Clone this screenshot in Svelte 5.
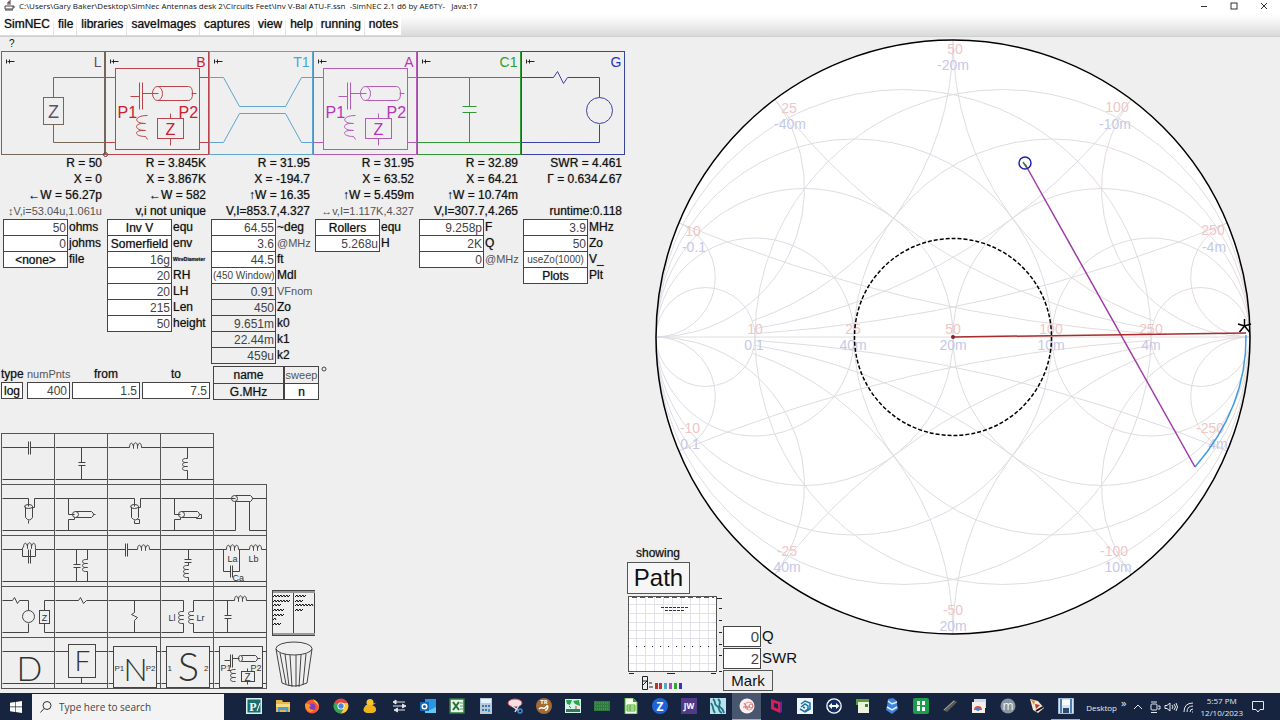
<script lang="ts">
	type Field = { label: string; value: string; kind?: 'button' | 'fixed' | 'small'; tone?: 'soft' | 'tiny' };
	type Stage = { id: string; symbol: string; color: string; line: string; readings: string[]; faint?: boolean; fields: Field[] };

	const menus = ['SimNEC', 'file', 'libraries', 'saveImages', 'captures', 'view', 'help', 'running', 'notes'];

	let stages: Stage[] = $state([
		{
			id: 'L', symbol: 'load', color: '#5f5064', line: '#75675a', faint: true,
			readings: ['R = 50', 'X = 0', '←W = 56.27p', '↕V,i=53.04u,1.061u'],
			fields: [
				{ label: 'ohms', value: '50' },
				{ label: 'johms', value: '0' },
				{ label: 'file', value: '<none>', kind: 'button' }
			]
		},
		{
			id: 'B', symbol: 'network', color: '#cc2030', line: '#b9464c',
			readings: ['R = 3.845K', 'X = 3.867K', '←W = 582', 'v,i not unique'],
			fields: [
				{ label: 'equ', value: 'Inv V', kind: 'button' },
				{ label: 'env', value: 'Somerfield', kind: 'button' },
				{ label: 'WireDiameter', value: '16g', tone: 'tiny' },
				{ label: 'RH', value: '20' },
				{ label: 'LH', value: '20' },
				{ label: 'Len', value: '215' },
				{ label: 'height', value: '50' }
			]
		},
		{
			id: 'T1', symbol: 'line', color: '#46a6dc', line: '#5ba6d2',
			readings: ['R = 31.95', 'X = -194.7', '↑W = 16.35', 'V,I=853.7,4.327'],
			fields: [
				{ label: '~deg', value: '64.55' },
				{ label: '@MHz', value: '3.6', tone: 'soft' },
				{ label: 'ft', value: '44.5' },
				{ label: 'Mdl', value: '(450 Window)', kind: 'small' },
				{ label: 'VFnom', value: '0.91', kind: 'fixed', tone: 'soft' },
				{ label: 'Zo', value: '450', kind: 'fixed' },
				{ label: 'k0', value: '9.651m', kind: 'fixed' },
				{ label: 'k1', value: '22.44m', kind: 'fixed' },
				{ label: 'k2', value: '459u', kind: 'fixed' }
			]
		},
		{
			id: 'A', symbol: 'network', color: '#b536b8', line: '#b45cb8', faint: true,
			readings: ['R = 31.95', 'X = 63.52', '↑W = 5.459m', '↔v,I=1.117K,4.327'],
			fields: [
				{ label: 'equ', value: 'Rollers', kind: 'button' },
				{ label: 'H', value: '5.268u' }
			]
		},
		{
			id: 'C1', symbol: 'shuntcap', color: '#2aa02a', line: '#2f9a35',
			readings: ['R = 32.89', 'X = 64.21', '↑W = 10.74m', 'V,I=307.7,4.265'],
			fields: [
				{ label: 'F', value: '9.258p' },
				{ label: 'Q', value: '2K' },
				{ label: '@MHz', value: '0', tone: 'soft' }
			]
		},
		{
			id: 'G', symbol: 'generator', color: '#2a32b4', line: '#3a43a4',
			readings: ['SWR = 4.461', 'Γ = 0.634∠67', '', 'runtime:0.118'],
			fields: [
				{ label: 'MHz', value: '3.9' },
				{ label: 'Zo', value: '50' },
				{ label: 'V_', value: 'useZo(1000)', kind: 'small' },
				{ label: 'Plt', value: 'Plots', kind: 'button' }
			]
		}
	]);

	const palette = [
		['series capacitor', 'shunt capacitor', 'series inductor', 'shunt inductor'],
		['series open stub', 'shunt open stub', 'series shorted stub', 'shunt shorted stub', 'transmission line'],
		['series parallel LC', 'shunt parallel LC', 'series LC', 'shunt series LC', 'trap'],
		['generator and load', 'series resistor', 'shunt resistor', 'transformer', 'L network'],
		['D block', 'F block', 'N block', 'S block', 'circuit block']
	];

	// chart geometry, in units of the chart's own view box
	const cx = 327;
	const cy = 300;
	const R = 297;
	const steps = [0.2, 0.5, 1, 2, 5];

	function gamma(r: number, x: number) {
		const d = (r + 1) ** 2 + x * x;
		return [(r * r - 1 + x * x) / d, (2 * x) / d];
	}

	// a reactance arc from the rim inwards; the flat ones stop at the r = 5 circle
	function arc(x: number, side: number, flip: number) {
		const [ax, ay] = gamma(0, x);
		const [bx, by] = x <= 1 ? gamma(5, x) : [1, 0];
		const p = (u: number, v: number) => `${(cx + side * u * R).toFixed(1)} ${(cy - flip * v * R).toFixed(1)}`;
		const sweep = side * flip > 0 ? 0 : 1;
		return `M${p(ax, ay)}A${R / x} ${R / x} 0 0 ${sweep} ${p(bx, by)}`;
	}

	const reactances = steps.flatMap((x) => [arc(x, 1, 1), arc(x, 1, -1)]);
	const susceptances = steps.flatMap((x) => [arc(x, -1, 1), arc(x, -1, -1)]);

	const ohmLabels: [string, number, number][] = [
		['50', 329, 17], ['25', 163, 76], ['100', 491, 75], ['10', 67, 199], ['250', 587, 198],
		['10', 129, 297], ['25', 227, 297], ['50', 327, 297], ['100', 425, 297], ['250', 525, 297],
		['-10', 64, 396], ['-25', 161, 519], ['-50', 327, 578], ['-100', 488, 519], ['-250', 584, 396]
	];
	const mhoLabels: [string, number, number][] = [
		['-20m', 327, 33], ['-40m', 164, 92], ['-10m', 489, 92], ['-0.1', 68, 215], ['-4m', 588, 215],
		['0.1', 128, 313], ['40m', 227, 313], ['20m', 327, 313], ['10m', 425, 313], ['4m', 525, 313],
		['0.1', 64, 412], ['40m', 161, 535], ['20m', 327, 594], ['10m', 492, 535], ['4m', 592, 412]
	];

	const apps = [
		'pilot', 'folder', 'firefox', 'chrome', 'duck', 'arrows', 'outlook', 'excel', 'calc', 'snip',
		'tr', 'map', 'board', 'sheet', 'zoom', 'jw', 'waves', 'smith', 'quick', 'swirl', 'viewer',
		'notepad', 'cubes', 'tile', 'pen', 'photos', 'm', 'paint', 'disk'
	];
	const running = ['smith', 'disk'];
</script>

{#snippet coil(x: number, y: number)}
	<path d="M{x} {y}c0-5 3-6 4-1v2v-2c0-5 4-5 4 0v2v-2c1-5 4-4 4 1" />
{/snippet}

{#snippet vcoil(x: number, y: number)}
	<path d="M{x} {y}h-2c-4 0-4 4 0 4h2h-2c-4 0-4 4 0 4h2h-2c-4 0-4 4 0 4h2" />
{/snippet}

{#snippet network()}
	<rect x="10" y="17" width="84" height="81" />
	<path d="M25 45h9M34 31v27M37 31v27M37 42h16M86 42h5" />
	<ellipse cx="52" cy="42" rx="5" ry="7" />
	<path d="M52 35h31q4 0 4 7t-4 7h-31" />
	<path d="M42 64c-14 0-14 8-2 8c-12-1-12 7 0 7c-12-1-12 6 0 6l2 3" />
	<rect x="52" y="67" width="26" height="20" />
	<path d="M65 62v5M65 87v7" />
	<text class="port" x="12" y="66" font-size="16">P1</text>
	<text class="port" x="73" y="66" font-size="16">P2</text>
	<text x="65" y="83" font-size="16" text-anchor="middle">Z</text>
{/snippet}

{#snippet stageSymbol(kind: string)}
	{#if kind === 'load'}
		<path d="M104 26H52V46M52 73V91H104" />
		<rect x="42" y="46" width="20" height="27" />
		<text x="52" y="66" font-size="18" text-anchor="middle">Z</text>
	{:else if kind === 'network'}
		<path d="M0 26h10M94 26h10M0 91h10M94 91h10" />
		{@render network()}
	{:else if kind === 'line'}
		<path d="M0 26H14L30 55H76L92 26H104M0 91H14L30 62H76L92 91H104" />
	{:else if kind === 'shuntcap'}
		<path d="M0 26H104M0 91H104M52 26V55M45 55h14M45 61h14M52 61V91" />
	{:else}
		<path d="M0 26H32L36 20L42 32L46 26H78V46M78 73V91H0" />
		<circle cx="78" cy="59" r="13" />
	{/if}
{/snippet}

{#snippet partSymbol(name: string)}
	{#if name === 'series capacitor'}
		<path d="M0 13H26M28 13H52M0 45H52M26 7V20M28 7V20" />
	{:else if name === 'shunt capacitor'}
		<path d="M0 13H52M0 45H52M26 13V28M23 28h7M23 31h7M26 31V45" />
	{:else if name === 'series inductor'}
		<path d="M0 13H21M33 13H52M0 45H52" />{@render coil(21, 13)}
	{:else if name === 'shunt inductor'}
		<path d="M0 13H52M0 45H52M26 13V24M26 36V45" />{@render vcoil(26, 24)}
	{:else if name === 'series open stub' || name === 'series shorted stub'}
		<path d="M0 13H26V21M32 22V13H52M0 45H52M23 21V32q4 5 7 0V21M30 22h2" />
		<ellipse cx="26" cy="21" rx="4" ry="2" />
		{#if name === 'series open stub'}<path d="M26 35v3" />{:else}<path d="M26 35v3h5v-4h-2" />{/if}
	{:else if name === 'shunt open stub' || name === 'shunt shorted stub'}
		<path d="M0 13H52M0 45H52M13 13V29H19M13 45V34H19V32M20 26H36q4 3 0 6H20" />
		<ellipse cx="20" cy="29" rx="3" ry="3" />
		{#if name === 'shunt open stub'}<path d="M38 29h2" />{:else}<path d="M38 29h2v4h-5v-1" />{/if}
	{:else if name === 'transmission line'}
		<path d="M0 13H21M38 13H52M21 10H36q4 3 0 6H21M21 16V45H0M35 16V45H52" />
		<ellipse cx="20" cy="13" rx="3" ry="3" />
	{:else if name === 'series parallel LC'}
		<path d="M0 13H20V20H33V13H52M0 45H52M26 13V27M28 13V27M20 13v-2M33 13v-2" />{@render coil(21, 11)}
	{:else if name === 'shunt parallel LC'}
		<path d="M0 13H52M0 45H52M21 13V28M18 28h7M18 31h7M21 31V45M32 13V23M32 35V45" />{@render vcoil(32, 23)}
	{:else if name === 'series LC'}
		<path d="M0 13H17M19 13H29M41 13H52M0 45H52M17 7V20M19 7V20" />{@render coil(29, 13)}
	{:else if name === 'shunt series LC'}
		<path d="M0 13H52M0 45H52M27 13V23M23 23h7M23 26h7M27 26V29M27 41V45" />{@render vcoil(27, 29)}
	{:else if name === 'trap'}
		<path d="M0 13H12M24 13H35M47 13H52M0 45H52M9 13V35H16M18 35H25V13M16 29V41M18 29V41" />
		{@render coil(12, 13)}{@render coil(35, 13)}
		<text x="13" y="25" font-size="9">La</text>
		<text x="34" y="25" font-size="9">Lb</text>
		<text x="18" y="44" font-size="9">Ca</text>
	{:else if name === 'generator and load'}
		<path d="M0 13H10l2-3l3 6l2-3H26V23M26 36V45H0M52 13H42V23M42 36V45H52" />
		<circle cx="26" cy="29" r="6" />
		<rect x="37" y="23" width="10" height="13" />
		<text x="42" y="33" font-size="9" text-anchor="middle">Z</text>
	{:else if name === 'series resistor'}
		<path d="M0 13H23l2-3l3 6l3-3H52M0 45H52" />
	{:else if name === 'shunt resistor'}
		<path d="M0 13H52M0 45H52M26 13V25l-3 2l6 3l-3 3V45" />
	{:else if name === 'transformer'}
		<path d="M0 13H22V24M22 36V45H0M52 13H32V24M32 36V45H52" />
		{@render vcoil(22, 24)}{@render vcoil(32, 24)}
		<text x="7" y="33" font-size="9">Ll</text>
		<text x="35" y="33" font-size="9">Lr</text>
	{:else if name === 'L network'}
		<path d="M0 13H20M32 13H52M0 45H52M13 13V28M10 28h7M10 31h7M13 31V45" />{@render coil(20, 13)}
	{:else if name === 'D block'}
		<path d="M0 13H52M0 45H52" />
		<text class="big" x="27" y="42" font-size="34">D</text>
	{:else if name === 'F block'}
		<path d="M0 13H13M40 13H52M0 45H52M26 39V45" />
		<rect x="13" y="6" width="27" height="33" />
		<text class="big" x="27" y="32" font-size="28">F</text>
	{:else if name === 'N block' || name === 'S block'}
		<path d="M0 13H5M48 13H52M0 45H5M48 45H52" />
		<rect x="5" y="8" width="43" height="41" />
		<text class="big" x="27" y="42" font-size={name === 'N block' ? 32 : 40}>{name[0]}</text>
		<text x="6" y="32" font-size="8">{name === 'N block' ? 'P1' : '1'}</text>
		<text x="47" y="32" font-size="8" text-anchor="end">{name === 'N block' ? 'P2' : '2'}</text>
	{:else}
		<path d="M0 13H5M48 13H52M0 45H5M48 45H52M10 22h6M16 16V29M18 16V29M18 20h7M43 20h3M27 17H41q4 3 0 6H27" />
		<rect x="5" y="8" width="43" height="41" />
		<ellipse cx="26" cy="20" rx="2" ry="3" />
		<path d="M33 30v3M33 43v3" />
		<rect x="27" y="33" width="13" height="10" />
		{@render vcoil(21, 31)}
		<text x="6" y="32" font-size="9">P1</text>
		<text x="36" y="32" font-size="9">P2</text>
		<text x="33" y="42" font-size="10" text-anchor="middle">Z</text>
	{/if}
{/snippet}

{#snippet appIcon(name: string)}
	{#if name === 'pilot'}
		<rect width="16" height="16" fill="#d9efec" /><rect x="1.500" y="1.500" width="13" height="13" fill="#176f70" />
		<text x="7" y="13" font-size="12" font-weight="bold" font-family="Liberation Serif, serif" fill="#fff" text-anchor="middle">P</text>
		<path d="M11 13l3-8" stroke="#fff" />
	{:else if name === 'folder'}
		<path d="M1 2h6l1 2h7v10H1z" fill="#e9b64a" /><path d="M1 6h14v3H1z" fill="#f8dc84" /><path d="M3 9h10v5h-2v-2H5v2H3z" fill="#4b9fd8" />
	{:else if name === 'firefox'}
		<circle cx="8" cy="8.500" r="7" fill="#f5563a" /><path d="M9 1c6 3 7 9 4 12c4-7-2-7-4-12z" fill="#ffd23c" /><circle cx="8" cy="9" r="3.500" fill="#7b3fc4" /><path d="M1 6c2-1 5 0 6 2c-3 0-2 4 3 4c-3 4-9 1-9-6z" fill="#ff9422" />
	{:else if name === 'chrome'}
		<circle cx="8" cy="8" r="7.500" fill="#e0463a" /><path d="M8 8L1.500 4.500A7.500 7.500 0 0 0 8 15.500l3-5z" fill="#37a453" /><path d="M8 15.500A7.500 7.500 0 0 0 14.700 5H8l3.500 4z" fill="#f8ce3b" /><circle cx="8" cy="8" r="3.600" fill="#fff" /><circle cx="8" cy="8" r="2.700" fill="#4a86e0" />
	{:else if name === 'duck'}
		<circle cx="8" cy="4.500" r="3.500" fill="#f7c62f" /><path d="M4 7h6c6 2 5 8 0 8H5c-5-1-4-5-1-8z" fill="#efb41c" /><path d="M11 5h3l-3 2z" fill="#e07a1c" />
	{:else if name === 'arrows'}
		<path d="M14 4H5M5 2L2 4l3 2zM2 8h9M11 6l4 2l-4 2M14 12H7M7 10l-4 2l4 2" stroke="#e6e6e6" fill="#e6e6e6" />
	{:else if name === 'outlook'}
		<rect x="5" y="1" width="11" height="14" fill="#2a96e0" /><path d="M5 9l5 3l6-3v6H5z" fill="#64c6f2" /><rect y="4" width="9" height="9" fill="#1268b8" /><circle cx="4.500" cy="8.500" r="2.300" fill="none" stroke="#fff" stroke-width="1.500" />
	{:else if name === 'excel'}
		<rect x="1" y="1" width="14" height="14" fill="#e8f2e6" stroke="#2d7d3e" stroke-width="1.500" /><path d="M4 4l6 8M10 4l-6 8" stroke="#227238" stroke-width="2" /><path d="M11 5h3M11 8h3M11 11h3" stroke="#58a066" />
	{:else if name === 'calc'}
		<rect x="2" y="0" width="12" height="16" fill="#b9c9d5" /><rect x="3" y="1" width="10" height="4" fill="#e4f4ff" /><path d="M4 7h2v2H4zM7 7h2v2H7zM10 7h2v2h-2zM4 11h2v2H4zM7 11h2v2H7z" fill="#3e78a8" /><path d="M10 11h2v3h-2z" fill="#2b9ce8" />
	{:else if name === 'snip'}
		<ellipse cx="8" cy="5" rx="7" ry="4" fill="#f6dfe3" stroke="#d34b5e" /><path d="M5 8l7 5M12 7l-4 7" stroke="#d7e4ee" stroke-width="1.500" /><circle cx="13" cy="13" r="2" fill="none" stroke="#4a8cd0" stroke-width="1.500" />
	{:else if name === 'tr'}
		<circle cx="8" cy="8" r="8" fill="#a36a31" /><text x="8" y="6" font-size="6" font-weight="bold" fill="#fff" text-anchor="middle">TR</text><path d="M3 11c3-4 4 2 7-2s2 4-1 3" stroke="#fff" stroke-width="1.500" fill="none" />
	{:else if name === 'map'}
		<rect y="1" width="16" height="14" fill="#d8f2f0" /><path d="M1 2h6l-2 5l-3-1zM8 3l6-1l1 6l-5-2z" fill="#25a844" /><path d="M1 11h14v3H1z" fill="#317a52" /><path d="M4 8l2 2M11 8v3" stroke="#d34" />
	{:else if name === 'board'}
		<rect y="3" width="16" height="10" fill="#2f7a3d" /><path d="M1 5h14M1 8h14M1 11h14" stroke="#58a35c" stroke-dasharray="1 1" />
	{:else if name === 'sheet'}
		<path d="M2 0h8l4 4v12H2z" fill="#f4fff0" stroke="#52b52c" /><path d="M10 0v4h4z" fill="#3a9a1c" /><path d="M4 7h8v6H4zM4 9h8M4 11h8M7 7v6" stroke="#4aaa2a" fill="none" />
	{:else if name === 'zoom'}
		<circle cx="8" cy="8" r="8" fill="#1f63d8" /><text x="8" y="12.500" font-size="12" font-weight="bold" fill="#fff" text-anchor="middle">Z</text>
	{:else if name === 'jw'}
		<rect width="16" height="16" fill="#523a88" /><text x="8" y="11" font-size="8" font-weight="bold" fill="#fff" text-anchor="middle">JW</text>
	{:else if name === 'waves'}
		<rect width="16" height="16" fill="#b9e1e8" /><path d="M3 1c4 3 0 5 4 7s0 5 5 7M8 1c5 4-1 6 2 8s3 3 4 6M1 5c3 4 1 6 4 10" stroke="#1b7488" stroke-width="1.800" fill="none" />
	{:else if name === 'smith'}
		<circle cx="8" cy="8" r="7.500" fill="#faf0f0" /><circle cx="10" cy="8" r="4" fill="none" stroke="#e29a9a" /><circle cx="12" cy="8" r="2" fill="none" stroke="#d77" /><path d="M5 5l4 6M4 9h7" stroke="#d66" />
	{:else if name === 'quick'}
		<path d="M3 1l9 3v11l-9-4z" fill="#d51f58" /><path d="M6 5l4 1v5l-4-2z" fill="#1b2444" /><path d="M12 4l2-1v11l-2 1z" fill="#7a1e8c" />
	{:else if name === 'swirl'}
		<rect width="16" height="16" fill="#eef5fa" /><path d="M4 6l4-3l5 2v6l-5 3l-5-3M4 9l4-3l3 2v3l-3 2M6 9l2 1" stroke="#1a73a8" stroke-width="1.500" fill="none" />
	{:else if name === 'viewer'}
		<circle cx="8" cy="8" r="7.800" fill="#fff" /><circle cx="8" cy="8" r="6.500" fill="#102e68" /><path d="M2.500 8l3.500-3v2h4V5l3.500 3l-3.500 3V9H6v2z" fill="#fff" />
	{:else if name === 'notepad'}
		<rect x="3" y="2" width="11" height="13" fill="#edf2de" /><path d="M1 1h13v3H3v3H1z" fill="#5b9c40" /><path d="M10 6h3v3h-3z" fill="#3d7d34" />
	{:else if name === 'cubes'}
		<path d="M4 1l5-1l4 3v3l1 5l-6 5l-6-4l1-4z" fill="#3f83dc" /><path d="M4 3l4 3l5-2M3 9l5 3l5-3" stroke="#e2f1ff" stroke-width="1.500" fill="none" />
	{:else if name === 'tile'}
		<rect width="16" height="16" rx="2" fill="#1d9e4c" /><path d="M4 3h3v4H4zM4 8h3v5H4zM9 3h3v4H9zM9 9h3v4H9z" fill="#fff" />
	{:else if name === 'pen'}
		<path d="M1 12L12 2l3 2L5 14z" fill="#5c5b59" /><path d="M2 12L12 3" stroke="#b3aca2" />
	{:else if name === 'photos'}
		<rect x="3" y="1" width="12" height="9" fill="#cddbe8" /><rect x="1" y="4" width="13" height="11" fill="#f3eee9" /><path d="M3 12a4 4 0 0 1 8 0z" fill="#df5144" /><circle cx="7" cy="11" r="2" fill="#437fcf" />
	{:else if name === 'm'}
		<circle cx="8" cy="8" r="7.500" fill="#8596a5" /><text x="8" y="12" font-size="12" fill="#e9f3fa" text-anchor="middle">m</text>
	{:else if name === 'paint'}
		<path d="M1 1l8 2l6 7l-6 5l-5-3z" fill="#f1e7d6" /><path d="M2 2l4 1l-1 4z" fill="#de8b28" /><path d="M6 6l5 1l-4 4z" fill="#c7342e" /><path d="M7 13l7-4" stroke="#111" stroke-width="2" />
	{:else}
		<rect width="16" height="16" fill="#d6e6f4" stroke="#7293b6" /><path d="M2 1h2v14H2zM12 1h2v14h-2z" fill="#4e7fb0" /><rect x="4" y="2" width="8" height="5" fill="#fafafa" /><rect x="5" y="10" width="6" height="5" fill="#304a6e" />
	{/if}
{/snippet}

<div class="app">
	<header class="title-bar">
		<svg width="11" height="11" viewBox="0 0 11 11" fill="none" stroke="#444">
			<path d="M1 6h8v3H1zM9 6h1v2M4 5V2l2 1v2M6 3V0M1 10h8" />
			<path d="M5 1v3" stroke="#b33" />
		</svg>
		<span class="path">C:\Users\Gary Baker\Desktop\SimNec Antennas desk 2\Circuits Feet\Inv V-Bal ATU-F.ssn &nbsp;-SimNEC 2.1 d6 by AE6TY- &nbsp; Java:17</span>
		<div class="window-buttons">
			<button aria-label="Minimize"><svg width="8" height="8" viewBox="0 0 8 8"><path d="M1 4.500h6" /></svg></button>
			<button aria-label="Maximize"><svg width="8" height="8" viewBox="0 0 8 8"><rect x="1" y="1" width="6" height="6" /></svg></button>
			<button aria-label="Close"><svg width="8" height="8" viewBox="0 0 8 8"><path d="M1 1l6 6M7 1l-6 6" /></svg></button>
		</div>
	</header>

	<nav class="menu-bar">
		{#each menus as item}
			<button>{item}</button>
		{/each}
	</nav>

	<main class="workspace">
		<section class="circuit">
			<button class="help">?</button>

			<div class="stages">
				{#each stages as stage}
					<div class="stage">
						<svg class="schematic" viewBox="-0.500 -0.500 104 104" stroke={stage.line} fill="none" style:color={stage.color}>
							<rect width="103" height="103" />
							{@render stageSymbol(stage.symbol)}
							<path d="M5 8v4M6 10h7M8 8v4" stroke="#222" />
							<text x="100" y="15" font-size="14" text-anchor="end">{stage.id}</text>
							{#if stage.id === 'L'}<circle cx="104" cy="103" r="2" stroke="#7a3030" />{/if}
						</svg>
						{#each stage.readings as reading, i}
							<p class="reading" class:faint={stage.faint && i === 3}>{reading}</p>
						{/each}
						{#each stage.fields as field, i}
							<div class="field">
								{#if field.kind === 'button'}
									<button id="{stage.id}-{i}" class="box">{field.value}</button>
								{:else}
									<input
										id="{stage.id}-{i}"
										class="box {field.kind ?? ''}"
										readonly={field.kind === 'fixed'}
										bind:value={field.value}
									/>
								{/if}
								<label class={field.tone} for="{stage.id}-{i}">{field.label}</label>
							</div>
						{/each}
					</div>
				{/each}
			</div>

			<div class="sweep">
				<div class="col type"><label for="type">type</label><button id="type">log</button></div>
				<div class="col points"><label class="soft" for="points">numPnts</label><input id="points" value="400" /></div>
				<div class="col range"><label for="from">from</label><input id="from" value="1.5" /></div>
				<div class="col range"><label for="to">to</label><input id="to" value="7.5" /></div>
				<div class="col framed name"><label for="name">name</label><button id="name">G.MHz</button></div>
				<div class="col framed flag"><label class="soft" for="flag">sweep</label><button id="flag">n</button></div>
				<svg width="6" height="6" viewBox="0 0 6 6" fill="none" stroke="#444"><circle cx="3" cy="3" r="2" /></svg>
			</div>

			<div class="parts">
				<div class="palette">
					{#each palette as row}
						<div class="row">
							{#each row as part}
								<button aria-label={part}>
									<svg viewBox="-0.500 -0.500 52 50" width="52" height="50">{@render partSymbol(part)}</svg>
								</button>
							{/each}
						</div>
					{/each}
				</div>
				<div class="tools">
					<button aria-label="Notes">
						<svg width="44" height="46" viewBox="0 0 44 46" fill="none" stroke="#444">
							<rect x="0.500" y="0.500" width="42" height="45" />
							<path d="M1 2h42M1 44h42" stroke="#999" stroke-width="2" />
							<path d="M21.500 3v40" />
							<path d="M1 7l2-2l1 2l2-2l1 2l2-2l1 2l2-2l1 2l2-2l1 2l2-2M1 12l2-2l1 2l2-2l1 2l2-2l1 2l2-2l1 2l2-2l1 2l2-2M1 16l2-2l1 2l2-2l1 2l2-2M1 21l2-2l1 2l2-2l1 2l2-2l1 2l2-2M1 26l2-2l1 2l2-2l1 2l2-2l1 2l2-2M1 30l2-2l1 2M1 35l2-2l1 2l2-2l1 2l2-2M23 7l2-2l1 2l2-2l1 2l2-2l1 2l2-2M23 12l2-2l1 2l2-2l1 2l2-2M23 16l2-2l1 2l2-2l1 2l2-2l1 2l2-2l1 2l2-2l1 2l2-2l1 2M23 21l2-2l1 2l2-2l1 2l2-2" stroke="#111" />
						</svg>
					</button>
					<button aria-label="Trash">
						<svg width="44" height="47" viewBox="0 0 44 47" fill="none" stroke="#444">
							<ellipse cx="22" cy="7.500" rx="18" ry="6.500" />
							<path d="M4 8l6 34q12 6 25 0l5-34M8 12l6 31M13 13l4 32M18 14l2 32M24 14v32M29 14l-2 32M34 13l-3 31" />
						</svg>
					</button>
				</div>
			</div>
		</section>

		<section class="results">
			<svg class="chart" viewBox="0 0 654 656">
				<circle class="disc" {cx} {cy} r={R} />
				<g class="grid">
					<path d="M{cx - R} {cy}H{cx + R}" />
					{#each steps as r}
						<circle cx={cx + (R * r) / (1 + r)} {cy} r={R / (1 + r)} />
						<circle class="mho" cx={cx - (R * r) / (1 + r)} {cy} r={R / (1 + r)} />
					{/each}
					{#each reactances as d}
						<path {d} />
					{/each}
					{#each susceptances as d}
						<path class="mho" {d} />
					{/each}
				</g>
				{#each ohmLabels as [text, x, y]}
					<text class="ohm" {x} {y}>{text}</text>
				{/each}
				{#each mhoLabels as [text, x, y]}
					<text class="siemens" {x} {y}>{text}</text>
				{/each}
				<circle class="rim" {cx} {cy} r={R} />
				<circle class="swr" {cx} {cy} r="98.500" />
				<path d="M620 298Q621 370 569 430" stroke="#3f9be4" />
				<path d="M399 127L569 430" stroke="#a03aa6" />
				<path d="M327 300L620 296" stroke="#a82c2c" />
				<circle cx="327" cy="300" r="2" fill="#8c1f28" />
				<path d="M397 125l4 6" stroke="#3d7a3d" />
				<circle cx="399" cy="126" r="6" stroke="#2222aa" />
				<path d="M618.500 282v8M612 287l6.500 2l6.500-2M618.500 289l-5 6M618.500 289l5 6" stroke="#000" />
			</svg>

			<div class="view-panel">
				<div class="showing">
					<label for="showing">showing</label>
					<button id="showing">Path</button>
					<svg width="96" height="96" viewBox="0 0 96 96">
						<rect x="1.500" y="1.500" width="88" height="75" fill="#fff" stroke="#555" />
						<path d="M9.500 2v74M18.500 2v74M27.500 2v74M36.500 2v74M45.500 2v74M54.500 2v74M63.500 2v74M72.500 2v74M81.500 2v74M2 9.500h87M2 18.500h87M2 27.500h87M2 35.500h87M2 43.500h87M2 60.500h87M2 68.500h87" stroke="#e2e2ea" />
						<path d="M1 51.500h90" stroke="#222" stroke-dasharray="1 7" />
						<path d="M5 2.500h82" stroke="#555" stroke-dasharray="5 3" />
						<path d="M34 12.500h27M38 15.500h20" stroke="#333" stroke-dasharray="3 1" />
						<path d="M90 3.500h5M92 13.500h3M92 25.500h3M92 37.500h3M92 49.500h3M92 60.500h3M92 76.500h3M40 78.500h8M2 78.500h5M84 78.500h5" stroke="#222" />
						<path d="M15.500 81.500h5v13h-5zM16 86h5M16 90l4-4M22 88h3M22 92h4" fill="#eee" stroke="#222" />
						<path d="M28 91h8" stroke="#b33" stroke-width="6" stroke-dasharray="3 1" />
						<path d="M37 91h4" stroke="#5ac" stroke-width="6" stroke-dasharray="3 1" />
						<path d="M42 91h4" stroke="#b4b" stroke-width="6" stroke-dasharray="3 1" />
						<path d="M47 91h4" stroke="#3a3" stroke-width="6" stroke-dasharray="3 1" />
						<path d="M52 91h4" stroke="#33b" stroke-width="6" stroke-dasharray="3 1" />
					</svg>
				</div>
				<div class="marks">
					<div><input id="mark-q" value="0" /><label for="mark-q">Q</label></div>
					<div><input id="mark-swr" value="2" /><label for="mark-swr">SWR</label></div>
					<button>Mark</button>
				</div>
			</div>
		</section>
	</main>

	<footer class="taskbar">
		<button class="start" aria-label="Start">
			<svg width="12" height="12" viewBox="0 0 12 12" fill="#fff"><path d="M0 1.700L5 1v4.600H0zM5.600 1L12 0v5.600H5.600zM0 6.200h5v4.700l-5-.7zM5.600 6.200H12V12l-6.400-1z" /></svg>
		</button>
		<div class="search">
			<svg width="12" height="12" viewBox="0 0 12 12" fill="none" stroke="#333"><circle cx="7" cy="4.500" r="4" /><path d="M4 7.500L0.500 11.500" /></svg>
			<input placeholder="Type here to search" aria-label="Type here to search" />
		</div>
		<div class="apps">
			{#each apps as app}
				<button aria-label={app} class:active={app === 'smith'} class:running={running.includes(app)}>
					<svg width="16" height="16" viewBox="0 0 16 16" fill="none">{@render appIcon(app)}</svg>
				</button>
			{/each}
		</div>
		<div class="tray">
			<span class="desktop">Desktop <sup>»</sup></span>
			<svg width="64" height="14" viewBox="0 0 64 14" fill="none" stroke="#e4e8ee">
				<path d="M2 9l4-4l4 4" />
				<rect x="19" y="4" width="6" height="6" rx="1" /><path d="M26 6h2v3h-2M19 2h6M19 12.500h6" />
				<path d="M33 5.500h2l3-2.500v8l-3-2.500h-2zM40 5q2 2 0 4M42 4q3 3 0 6M44 3q3 4 0 8" />
				<path d="M52 12Q52 3 61 3M55 12Q55 6 61 6M58 12Q58 9 61 9M60 12h1" />
			</svg>
			<time>5:57 PM<br />12/10/2023</time>
			<button aria-label="Notifications">
				<svg width="12" height="13" viewBox="0 0 12 13" fill="none" stroke="#e4e8ee"><path d="M.5 1.500h11v8H8l-2 2.500l-2-2.500H.5z" /></svg>
			</button>
		</div>
	</footer>
</div>

<style>
	:global(body) {
		margin: 0;
		background: #efefef;
	}

	.app {
		min-height: 100vh;
		display: flex;
		flex-direction: column;
		font-family: "Liberation Sans", Arial, sans-serif;
		font-size: 12px;
		line-height: 16px;
		color: #111;
	}

	button,
	input {
		font: inherit;
		color: inherit;
		margin: 0;
		padding: 0;
		border: 0;
		border-radius: 0;
		background: none;
		box-sizing: border-box;
		min-width: 0;
	}

	svg {
		display: block;
		flex: none;
	}

	.title-bar {
		display: flex;
		align-items: center;
		height: 11px;
		padding: 0 12px 2px 4px;
		gap: 4px;
		background: #fff;
		font: 8px/11px "Open Sans", "Noto Sans", sans-serif;
	}

	.path {
		white-space: nowrap;
	}

	.window-buttons {
		margin-left: auto;
		display: flex;
		gap: 22px;
	}

	.window-buttons svg {
		fill: none;
		stroke: #333;
	}

	.menu-bar {
		display: flex;
		align-items: flex-start;
		height: 23px;
		border-bottom: 1px solid #cfcfcf;
		background: linear-gradient(#fff, #fbfbfb 20%, #dadada);
	}

	.menu-bar button {
		height: 22px;
		padding: 1px 3px 1px 4px;
		margin-right: 1px;
		background: #fff;
		text-shadow: 0 0 1px #555;
	}

	.workspace {
		flex: 1;
		display: grid;
		grid-template-columns: 626fr 654fr;
		align-items: start;
	}

	.circuit {
		padding: 0 1px;
	}

	.help {
		display: block;
		height: 14px;
		margin-left: 8px;
		font-size: 10px;
		line-height: 14px;
	}

	.stages {
		display: grid;
		grid-template-columns: repeat(6, 1fr);
	}

	.schematic {
		width: 100%;
		overflow: visible;
	}

	.schematic text {
		fill: currentColor;
		stroke: none;
	}

	.reading {
		margin: 0;
		padding-right: 3px;
		height: 16px;
		text-align: right;
		white-space: nowrap;
		text-shadow: 0 0 1px #777;
	}

	.faint {
		font-size: 11px;
		color: #555;
		text-shadow: none;
	}

	.field {
		display: flex;
		height: 16px;
		margin-left: 2px;
	}

	.box {
		width: 65px;
		height: 17px;
		flex: none;
		padding: 0 1px;
		border: 1px solid #444;
		background: #fff;
		text-align: right;
		color: #444;
	}

	button.box {
		text-align: center;
		color: #111;
		text-shadow: 0 0 1px #777;
	}

	.box.fixed {
		background: #efefef;
	}

	.box.small {
		font-size: 10px;
		text-align: center;
	}

	label {
		text-shadow: 0 0 1px #777;
		white-space: nowrap;
	}

	.field label {
		padding-left: 1px;
	}

	label.soft {
		font-size: 11px;
		color: #555;
		text-shadow: none;
	}

	label.tiny {
		font-size: 5px;
		font-weight: bold;
	}

	.sweep {
		display: flex;
		gap: 2px;
		margin-top: 3px;
	}

	.col {
		display: flex;
		flex-direction: column;
		text-align: center;
	}

	.col input,
	.col button {
		height: 17px;
		border: 1px solid #444;
		background: #fff;
	}

	.col input {
		padding-right: 2px;
		text-align: right;
		color: #444;
	}

	.col button {
		text-shadow: 0 0 1px #777;
	}

	.type {
		width: 22px;
	}

	.points {
		width: 43px;
		margin-left: 2px;
	}

	.range {
		width: 68px;
	}

	.framed {
		margin-left: 1px;
	}

	.framed label {
		height: 16px;
		border: 1px solid #444;
		border-bottom: 0;
	}

	.name {
		width: 71px;
	}

	.name button {
		background: #efefef;
	}

	.flag {
		width: 35px;
		margin-left: -2px;
	}

	.parts {
		display: flex;
		align-items: flex-end;
		gap: 6px;
		margin-top: 33px;
	}

	.row {
		display: flex;
		height: 51px;
	}

	.row button {
		width: 54px;
		height: 52px;
		margin-right: -1px;
		border: 1px solid #555;
	}

	.row svg {
		fill: none;
		stroke: #444;
		overflow: visible;
	}

	.row :global(text) {
		fill: #333;
		stroke: none;
	}

	.row :global(.big) {
		font-family: Lato, Inter, sans-serif;
		font-weight: 300;
		text-anchor: middle;
	}

	.tools {
		display: grid;
		gap: 5px;
	}

	.results {
		display: grid;
	}

	.chart {
		grid-area: 1 / 1;
		width: 100%;
		fill: none;
		stroke-width: 1.5;
	}

	.disc {
		fill: #fff;
	}

	.rim {
		stroke: #000;
	}

	.swr {
		stroke: #000;
		stroke-dasharray: 4 2;
	}

	.grid {
		stroke: #e3dcdc;
		stroke-width: 1;
	}

	.mho {
		stroke: #dcdde4;
	}

	.chart text {
		font-size: 14px;
		text-anchor: middle;
	}

	.ohm {
		fill: #f0c6c6;
	}

	.siemens {
		fill: #c6c8e6;
	}

	.view-panel {
		grid-area: 1 / 1;
		align-self: end;
		display: flex;
		align-items: flex-end;
		position: relative;
		padding: 0 0 2px 1px;
	}

	.showing {
		display: flex;
		flex-direction: column;
	}

	.showing label {
		width: 62px;
		text-align: center;
		margin-bottom: 1px;
	}

	.showing button {
		width: 63px;
		height: 32px;
		margin-bottom: 1px;
		border: 1px solid #555;
		background: #f6f6f6;
		font-size: 24px;
		line-height: 30px;
	}

	.marks {
		display: grid;
		gap: 1px;
		font-size: 15px;
		line-height: 20px;
	}

	.marks div {
		display: flex;
		gap: 1px;
	}

	.marks input {
		width: 38px;
		height: 21px;
		padding-right: 1px;
		border: 1px solid #444;
		background: #fff;
		text-align: right;
		color: #444;
	}

	.marks button {
		width: 50px;
		height: 21px;
		border: 1px solid #555;
	}

	.marks label {
		text-shadow: none;
	}

	.taskbar {
		display: flex;
		align-items: center;
		height: 27px;
		background: #17243f;
		font-family: "Open Sans", "Noto Sans", sans-serif;
		color: #e4e8ee;
	}

	.start {
		width: 32px;
		flex: none;
		display: grid;
		place-items: center;
	}

	.search {
		width: 192px;
		height: 26px;
		flex: none;
		box-sizing: border-box;
		display: flex;
		align-items: center;
		gap: 7px;
		padding-left: 8px;
		background: #f3f3f3;
	}

	.search input {
		flex: 1;
		font-size: 10px;
	}

	.search input::placeholder {
		color: #444;
		opacity: 1;
	}

	.apps {
		display: flex;
		margin-left: 15px;
	}

	.apps button {
		width: 29px;
		height: 27px;
		display: grid;
		place-items: center;
		border-bottom: 1px solid transparent;
	}

	.apps .running {
		border-bottom-color: #76b9ed;
	}

	.apps .active {
		background: #4a566e;
	}

	.tray {
		margin-left: auto;
		display: flex;
		align-items: center;
		gap: 5px;
		padding-right: 16px;
		font-size: 8px;
		line-height: 12px;
		text-align: center;
		white-space: nowrap;
	}

	.tray time {
		padding-right: 4px;
	}

	.desktop sup {
		margin-left: 2px;
		font-size: 11px;
		line-height: 8px;
	}
</style>
